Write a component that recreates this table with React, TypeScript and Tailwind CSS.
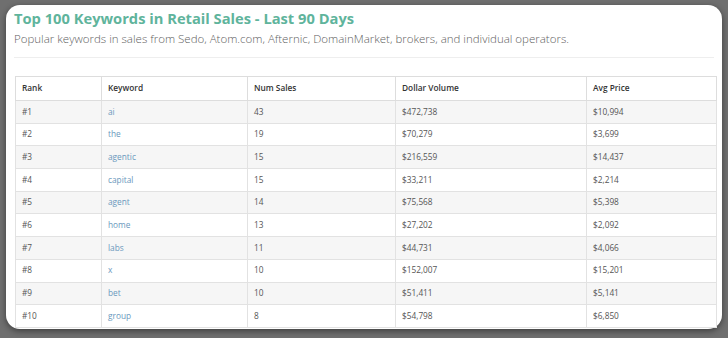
const ROWS = [
  { rank: '#1', keyword: 'ai', sales: 43, volume: '$472,738', avg: '$10,994' },
  { rank: '#2', keyword: 'the', sales: 19, volume: '$70,279', avg: '$3,699' },
  { rank: '#3', keyword: 'agentic', sales: 15, volume: '$216,559', avg: '$14,437' },
  { rank: '#4', keyword: 'capital', sales: 15, volume: '$33,211', avg: '$2,214' },
  { rank: '#5', keyword: 'agent', sales: 14, volume: '$75,568', avg: '$5,398' },
  { rank: '#6', keyword: 'home', sales: 13, volume: '$27,202', avg: '$2,092' },
  { rank: '#7', keyword: 'labs', sales: 11, volume: '$44,731', avg: '$4,066' },
  { rank: '#8', keyword: 'x', sales: 10, volume: '$152,007', avg: '$15,201' },
  { rank: '#9', keyword: 'bet', sales: 10, volume: '$51,411', avg: '$5,141' },
  { rank: '#10', keyword: 'group', sales: 8, volume: '$54,798', avg: '$6,850' },
];

export default function App() {
  return (
    <div className="h-[338px] w-[728px] overflow-hidden bg-[#6f6f6f] px-[6px] pt-[5px] font-['Open_Sans',sans-serif]">
      <div className="h-[324px] rounded-[14px] bg-white px-[8px] pt-[1px] shadow-[0_2px_6px_rgba(0,0,0,0.45)]">
        <h1 className="text-[14.7px] leading-[24px] font-bold text-[#5fb49c]">
          Top 100 Keywords in Retail Sales - Last 90 Days
        </h1>
        <p className="text-[11.5px] leading-[18px] font-light text-[#5f5f5f]">
          Popular keywords in sales from Sedo, Atom.com, Afternic, DomainMarket, brokers, and individual operators.
        </p>
        <div className="mt-[9px] h-px bg-[#eeeeee]" />

        <table className="mt-[18px] ml-px w-[701px] table-fixed border-collapse text-[8.3px] text-[#555]">
          <colgroup>
            <col className="w-[86px]" />
            <col className="w-[146px]" />
            <col className="w-[148px]" />
            <col className="w-[191px]" />
            <col className="w-[130px]" />
          </colgroup>
          <thead>
            <tr className="h-[24px] text-left text-[#333]">
              <th className="border border-[#dddddd] px-[6px] font-semibold">Rank</th>
              <th className="border border-[#dddddd] px-[6px] font-semibold">Keyword</th>
              <th className="border border-[#dddddd] px-[6px] font-semibold">Num Sales</th>
              <th className="border border-[#dddddd] px-[6px] font-semibold">Dollar Volume</th>
              <th className="border border-[#dddddd] px-[6px] font-semibold">Avg Price</th>
            </tr>
          </thead>
          <tbody>
            {ROWS.map((r, i) => (
              <tr key={r.rank} className={`h-[22.7px] ${i % 2 === 0 ? 'bg-[#f6f6f6]' : 'bg-white'}`}>
                <td className="border border-[#e2e2e2] px-[6px]">{r.rank}</td>
                <td className="border border-[#e2e2e2] px-[6px] text-[#6a98bd]">{r.keyword}</td>
                <td className="border border-[#e2e2e2] px-[6px]">{r.sales}</td>
                <td className="border border-[#e2e2e2] px-[6px]">{r.volume}</td>
                <td className="border border-[#e2e2e2] px-[6px]">{r.avg}</td>
              </tr>
            ))}
          </tbody>
        </table>
      </div>
    </div>
  );
}
